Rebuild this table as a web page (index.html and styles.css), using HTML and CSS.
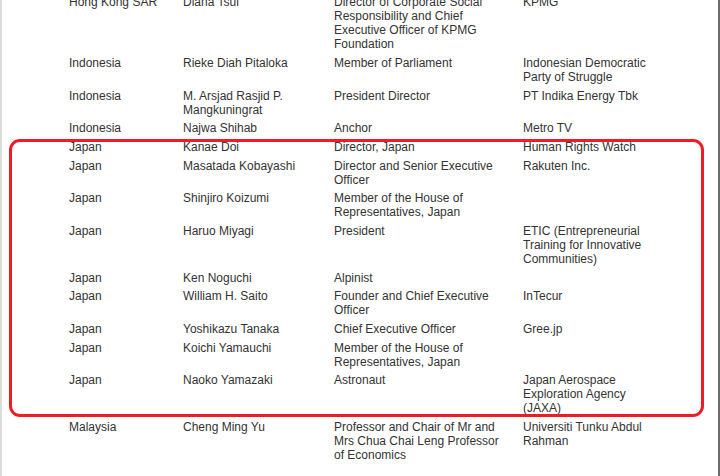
FILE: index.html
```html
<!DOCTYPE html>
<html>
<head>
<meta charset="utf-8">
<link rel="stylesheet" href="styles.css">
</head>
<body>
<div class="page">
  <div class="table">
    <div class="row"><div class="c1">Hong Kong SAR</div><div class="c2">Diana Tsui</div><div class="c3">Director of Corporate Social Responsibility and Chief Executive Officer of KPMG Foundation</div><div class="c4">KPMG</div></div>
    <div class="row"><div class="c1">Indonesia</div><div class="c2">Rieke Diah Pitaloka</div><div class="c3">Member of Parliament</div><div class="c4">Indonesian Democratic Party of Struggle</div></div>
    <div class="row"><div class="c1">Indonesia</div><div class="c2">M. Arsjad Rasjid P. Mangkuningrat</div><div class="c3">President Director</div><div class="c4">PT Indika Energy Tbk</div></div>
    <div class="row"><div class="c1">Indonesia</div><div class="c2">Najwa Shihab</div><div class="c3">Anchor</div><div class="c4">Metro TV</div></div>
    <div class="row"><div class="c1">Japan</div><div class="c2">Kanae Doi</div><div class="c3">Director, Japan</div><div class="c4">Human Rights Watch</div></div>
    <div class="row"><div class="c1">Japan</div><div class="c2">Masatada Kobayashi</div><div class="c3">Director and Senior Executive Officer</div><div class="c4">Rakuten Inc.</div></div>
    <div class="row"><div class="c1">Japan</div><div class="c2">Shinjiro Koizumi</div><div class="c3">Member of the House of Representatives, Japan</div><div class="c4"></div></div>
    <div class="row"><div class="c1">Japan</div><div class="c2">Haruo Miyagi</div><div class="c3">President</div><div class="c4">ETIC (Entrepreneurial Training for Innovative Communities)</div></div>
    <div class="row"><div class="c1">Japan</div><div class="c2">Ken Noguchi</div><div class="c3">Alpinist</div><div class="c4"></div></div>
    <div class="row"><div class="c1">Japan</div><div class="c2">William H. Saito</div><div class="c3">Founder and Chief Executive Officer</div><div class="c4">InTecur</div></div>
    <div class="row"><div class="c1">Japan</div><div class="c2">Yoshikazu Tanaka</div><div class="c3">Chief Executive Officer</div><div class="c4">Gree.jp</div></div>
    <div class="row"><div class="c1">Japan</div><div class="c2">Koichi Yamauchi</div><div class="c3">Member of the House of Representatives, Japan</div><div class="c4"></div></div>
    <div class="row"><div class="c1">Japan</div><div class="c2">Naoko Yamazaki</div><div class="c3">Astronaut</div><div class="c4">Japan Aerospace Exploration Agency (JAXA)</div></div>
    <div class="row"><div class="c1">Malaysia</div><div class="c2">Cheng Ming Yu</div><div class="c3">Professor and Chair of Mr and Mrs Chua Chai Leng Professor of Economics</div><div class="c4">Universiti Tunku Abdul Rahman</div></div>
  </div>
  <div class="highlight"></div>
</div>
</body>
</html>
```
FILE: styles.css
```css
html, body {
  margin: 0;
  padding: 0;
  background: #ffffff;
}
.page {
  position: relative;
  width: 720px;
  height: 476px;
  box-sizing: border-box;
  border-left: 2px solid #dcdcdc;
  border-right: 2px solid #6a6a6a;
  overflow: hidden;
  font-family: "Liberation Sans", Arial, sans-serif;
  font-size: 12px;
  line-height: 14px;
  color: #333333;
}
.table {
  margin-top: -4.7px;
  padding-left: 67px;
}
.row {
  display: grid;
  grid-template-columns: 114px 151px 189px 133px;
  padding-bottom: 4.67px;
}
.c2 { padding-right: 8px; }
.c3 { padding-right: 17px; }
.highlight {
  position: absolute;
  left: 7px;
  top: 139px;
  width: 689px;
  height: 272px;
  border: 3px solid #ee1c24;
  border-radius: 11px;
}
```
